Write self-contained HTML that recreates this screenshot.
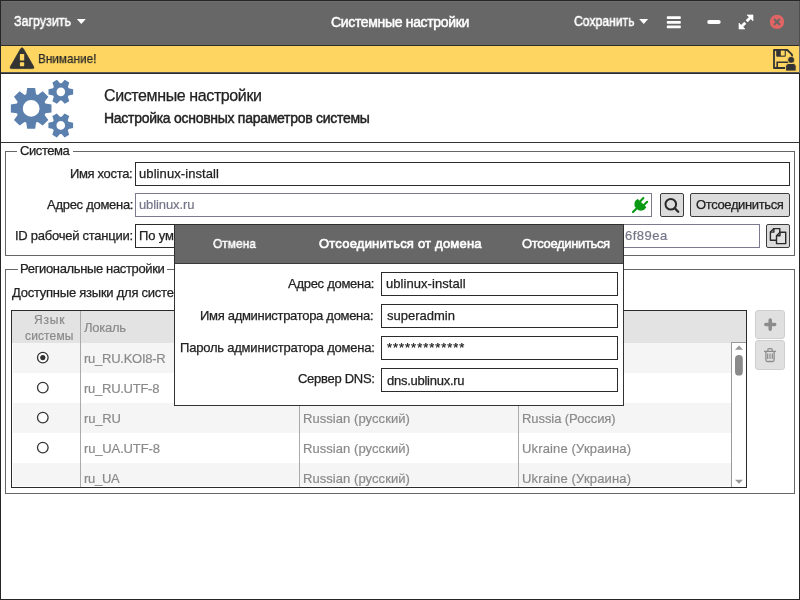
<!DOCTYPE html>
<html><head><meta charset="utf-8">
<style>
*{margin:0;padding:0;box-sizing:border-box}
html,body{width:800px;height:600px;overflow:hidden;background:#fff}
body{position:relative;font-family:"Liberation Sans",sans-serif;color:#222}
.a{position:absolute}
.t{position:absolute;white-space:nowrap;-webkit-text-stroke-width:0.25px;will-change:transform}
.box{position:absolute;border:1px solid #2b2b2b;background:#fff}
.gbox{position:absolute;border:1px solid #7a7a8c;background:#fff}
.btn{position:absolute;border:1px solid #3c3c3c;background:#dcdcdc;border-radius:2px}
.frame{position:absolute;border:1px solid #666}
.leg{position:absolute;background:#fff;height:3px}
svg{position:absolute;left:0;top:0;overflow:visible}
</style></head><body>
<!-- title bar -->
<div class="a" style="left:0;top:0;width:800px;height:45px;background:#676767"></div>
<div class="a" style="left:1px;top:1px;width:798px;height:1px;background:#6d6d6d"></div>
<div class="a" style="left:0;top:45px;width:800px;height:1px;background:#2e2e2e"></div>
<div class="t" style="left:14.2px;top:13.8px;font-size:14px;line-height:14px;font-weight:400;letter-spacing:0.0px;color:#fff;transform:scaleX(0.8906);transform-origin:0 0;-webkit-text-stroke-width:0.5px">Загрузить</div>
<div class="t" style="left:331.0px;top:14.6px;font-size:14px;line-height:14px;font-weight:400;letter-spacing:-0.333px;color:#fff;-webkit-text-stroke-width:0.5px">Системные настройки</div>
<div class="t" style="left:574.2px;top:14.0px;font-size:14px;line-height:14px;font-weight:400;letter-spacing:0.0px;color:#fff;transform:scaleX(0.8696);transform-origin:0 0;-webkit-text-stroke-width:0.5px">Сохранить</div>
<svg width="800" height="600" viewBox="0 0 800 600">
 <path d="M76.8,19 L85.8,19 L81.3,24 Z" fill="#fff"/>
 <path d="M639.2,19 L648.2,19 L643.7,24 Z" fill="#fff"/>
 <rect x="666.8" y="16.3" width="14" height="2.7" rx="0.8" fill="#fff"/>
 <rect x="666.8" y="21" width="14" height="2.7" rx="0.8" fill="#fff"/>
 <rect x="666.8" y="25.6" width="14" height="2.7" rx="0.8" fill="#fff"/>
 <rect x="707.2" y="20" width="13.5" height="4" rx="2" fill="#fff"/>
 <path d="M739,29 L739,23 L745,29 Z M753,14.9 L753,20.9 L747,14.9 Z" fill="#fff" stroke="#fff" stroke-width="0.6" stroke-linejoin="round"/>
 <path d="M740.8,27.2 L745.3,22.7 M751.2,16.7 L746.7,21.2" stroke="#fff" stroke-width="2.8"/>
 <circle cx="777" cy="21.9" r="7.2" fill="#e06464"/>
 <g stroke="#676767" stroke-width="2" stroke-linecap="round"><path d="M774.6,19.5 L779.4,24.3 M779.4,19.5 L774.6,24.3"/></g>
</svg>

<!-- yellow bar -->
<div class="a" style="left:0;top:46px;width:800px;height:26px;background:#fdd560"></div>
<div class="a" style="left:0;top:72px;width:800px;height:1px;background:#55555a"></div>
<div class="a" style="left:0;top:73px;width:800px;height:1px;background:#2a2a2a"></div>
<div class="t" style="left:37.6px;top:51.5px;font-size:13px;line-height:13px;font-weight:400;letter-spacing:0.0px;color:#2a2a2a;transform:scaleX(0.9048);transform-origin:0 0;">Внимание!</div>
<svg width="800" height="600" viewBox="0 0 800 600">
 <path d="M20.6,48.8 Q22,46.6 23.4,48.8 L33.6,66.6 Q34.6,68.6 32.4,68.6 L11.6,68.6 Q9.4,68.6 10.4,66.6 Z" fill="#333" stroke="#333" stroke-width="0.8" stroke-linejoin="round"/>
 <rect x="19.9" y="54" width="4.3" height="6.6" rx="0.6" fill="#fdd560"/>
 <rect x="19.9" y="62.3" width="4.3" height="3.9" rx="0.6" fill="#fdd560"/>
 <!-- floppy -->
 <path d="M774,50 L787.3,50 L792,54.7 L792,68 L774,68 Z" fill="none" stroke="#333" stroke-width="1.8" stroke-linejoin="round"/>
 <rect x="776.2" y="49.5" width="9.6" height="7.2" rx="1" fill="#333"/>
 <rect x="780.8" y="50.6" width="3.9" height="5" fill="#fdd560"/>
 <path d="M777.2,68 L777.2,62.2 L788,62.2" fill="none" stroke="#333" stroke-width="1.6"/>
 <circle cx="791.1" cy="59.9" r="3.5" fill="#333" stroke="#fdd560" stroke-width="0.8"/>
 <path d="M785.6,71.1 L785.6,66.4 Q785.6,63.5 788.5,63.5 L793.3,63.5 Q796.2,63.5 796.2,66.4 L796.2,71.1 Z" fill="#333" stroke="#fdd560" stroke-width="1"/>
</svg>

<!-- header -->
<svg width="800" height="600" viewBox="0 0 800 600"><path fill-rule="evenodd" fill="#5b80ad" d="M26.26,94.22 L27.16,88.09 L35.16,88.09 L36.06,94.22 L36.48,94.38 L36.90,94.54 L37.31,94.72 L37.72,94.91 L42.69,91.21 L48.35,96.87 L44.65,101.84 L44.84,102.25 L45.02,102.66 L45.18,103.08 L45.34,103.50 L51.47,104.40 L51.47,112.40 L45.34,113.30 L45.18,113.72 L45.02,114.14 L44.84,114.55 L44.65,114.96 L48.35,119.93 L42.69,125.59 L37.72,121.89 L37.31,122.08 L36.90,122.26 L36.48,122.42 L36.06,122.58 L35.16,128.71 L27.16,128.71 L26.26,122.58 L25.84,122.42 L25.42,122.26 L25.01,122.08 L24.60,121.89 L19.63,125.59 L13.97,119.93 L17.67,114.96 L17.48,114.55 L17.30,114.14 L17.14,113.72 L16.98,113.30 L10.85,112.40 L10.85,104.40 L16.98,103.50 L17.14,103.08 L17.30,102.66 L17.48,102.25 L17.67,101.84 L13.97,96.87 L19.63,91.21 L24.60,94.91 L25.01,94.72 L25.42,94.54 L25.84,94.38Z M39.56,108.40 A8.4,8.4 0 1,0 22.76,108.40 A8.4,8.4 0 1,0 39.56,108.40Z M61.63,83.29 L64.75,79.87 L69.26,82.47 L67.86,86.89 L68.08,87.21 L68.29,87.55 L68.48,87.90 L68.65,88.25 L73.17,89.25 L73.17,94.45 L68.65,95.45 L68.48,95.80 L68.29,96.15 L68.08,96.49 L67.86,96.81 L69.26,101.23 L64.75,103.83 L61.63,100.41 L61.23,100.44 L60.84,100.45 L60.45,100.44 L60.05,100.41 L56.93,103.83 L52.42,101.23 L53.82,96.81 L53.60,96.49 L53.39,96.15 L53.20,95.80 L53.03,95.45 L48.51,94.45 L48.51,89.25 L53.03,88.25 L53.20,87.90 L53.39,87.55 L53.60,87.21 L53.82,86.89 L52.42,82.47 L56.93,79.87 L60.05,83.29 L60.45,83.26 L60.84,83.25 L61.23,83.26Z M65.14,91.85 A4.3,4.3 0 1,0 56.54,91.85 A4.3,4.3 0 1,0 65.14,91.85Z M61.54,116.84 L64.66,113.42 L69.17,116.02 L67.77,120.44 L67.99,120.76 L68.20,121.10 L68.39,121.45 L68.56,121.80 L73.08,122.80 L73.08,128.00 L68.56,129.00 L68.39,129.35 L68.20,129.70 L67.99,130.04 L67.77,130.36 L69.17,134.78 L64.66,137.38 L61.54,133.96 L61.14,133.99 L60.75,134.00 L60.36,133.99 L59.96,133.96 L56.84,137.38 L52.33,134.78 L53.73,130.36 L53.51,130.04 L53.30,129.70 L53.11,129.35 L52.94,129.00 L48.42,128.00 L48.42,122.80 L52.94,121.80 L53.11,121.45 L53.30,121.10 L53.51,120.76 L53.73,120.44 L52.33,116.02 L56.84,113.42 L59.96,116.84 L60.36,116.81 L60.75,116.80 L61.14,116.81Z M65.05,125.40 A4.3,4.3 0 1,0 56.45,125.40 A4.3,4.3 0 1,0 65.05,125.40Z"/></svg>
<div class="t" style="left:103.7px;top:87.7px;font-size:16px;line-height:16px;font-weight:400;letter-spacing:-0.389px;color:#222;">Системные настройки</div>
<div class="t" style="left:103.7px;top:110.6px;font-size:14px;line-height:14px;font-weight:400;letter-spacing:-0.283px;color:#222;-webkit-text-stroke-width:0.45px">Настройка основных параметров системы</div>
<div class="a" style="left:0;top:142px;width:800px;height:1px;background:#333"></div>

<!-- Система frame -->
<div class="frame" style="left:5px;top:151px;width:790px;height:105px"></div>
<div class="leg" style="left:17px;top:150px;width:56px"></div>
<div class="t" style="left:20.25px;top:143.6px;font-size:13px;line-height:13px;font-weight:400;letter-spacing:-0.417px;color:#222;">Система</div>
<div class="t" style="left:69.9px;top:166.9px;font-size:13px;line-height:13px;font-weight:400;letter-spacing:-0.333px;color:#222;">Имя хоста:</div>
<div class="t" style="left:46.6px;top:197.75px;font-size:13px;line-height:13px;font-weight:400;letter-spacing:-0.283px;color:#222;">Адрес домена:</div>
<div class="t" style="left:14.7px;top:229.1px;font-size:13px;line-height:13px;font-weight:400;letter-spacing:-0.256px;color:#222;">ID рабочей станции:</div>
<div class="box" style="left:135px;top:162px;width:655px;height:24px"></div>
<div class="t" style="left:139.2px;top:166.7px;font-size:13px;line-height:13px;font-weight:400;letter-spacing:0.086px;color:#222;">ublinux-install</div>
<div class="gbox" style="left:135px;top:193px;width:517px;height:24px"></div>
<div class="t" style="left:139.2px;top:197.7px;font-size:13px;line-height:13px;font-weight:400;letter-spacing:-0.111px;color:#76768a;-webkit-text-stroke-width:0.2px">ublinux.ru</div>
<div class="btn" style="left:660px;top:193px;width:24px;height:24px"></div>
<div class="btn" style="left:690px;top:193px;width:100px;height:24px"></div>
<div class="t" style="left:695.6px;top:198.1px;font-size:13px;line-height:13px;font-weight:400;letter-spacing:-0.367px;color:#222;">Отсоединиться</div>
<div class="box" style="left:135px;top:224px;width:60px;height:24px"></div>
<div class="t" style="left:138.75px;top:228.6px;font-size:13px;line-height:13px;font-weight:400;letter-spacing:-0.15px;color:#222;">По ум</div>
<div class="gbox" style="left:195px;top:224px;width:565px;height:24px"></div>
<div class="t" style="left:624.9px;top:228.9px;font-size:13px;line-height:13px;font-weight:400;letter-spacing:0.48px;color:#76768a;-webkit-text-stroke-width:0.2px">6f89ea</div>
<div class="btn" style="left:766px;top:224px;width:24px;height:24px"></div>
<svg width="800" height="600" viewBox="0 0 800 600">
 <!-- plug -->
 <g fill="#0c9a14" stroke="#0c9a14" stroke-linecap="round">
  <path d="M633,212 L637,208" stroke-width="2.2"/>
  <path d="M635.4,206.2 Q634.4,201.6 637.6,199.8 L645.4,207.4 Q643.4,210.8 638.8,209.6 Z" stroke-width="1.5" stroke-linejoin="round"/>
  <path d="M640.3,201.3 L643.4,198 M643.9,205 L647.2,201.8" stroke-width="2.1"/>
 </g>
 <!-- search -->
 <circle cx="670.8" cy="204.3" r="5.3" fill="none" stroke="#2a2a2a" stroke-width="2"/>
 <path d="M675,208.5 L678.2,211.7" stroke="#2a2a2a" stroke-width="2.3" stroke-linecap="round"/>
 <!-- copy -->
 <g fill="#e2e2e2" stroke="#2a2a2a" stroke-width="1.4" stroke-linejoin="round">
  <path d="M773.9,228.6 L779.8,228.6 L779.8,240.2 L770.4,240.2 L770.4,232.1 Z"/>
  <path d="M770.4,232.1 L773.9,232.1 L773.9,228.6" fill="none"/>
  <path d="M780,232.2 L785.7,232.2 L785.7,243.6 L776.5,243.6 L776.5,235.7 Z"/>
  <path d="M776.5,235.7 L780,235.7 L780,232.2" fill="none"/>
 </g>
</svg>

<!-- Regional frame -->
<div class="frame" style="left:5px;top:269px;width:790px;height:225px"></div>
<div class="leg" style="left:18px;top:268px;width:149px"></div>
<div class="t" style="left:20.0px;top:262.3px;font-size:13px;line-height:13px;font-weight:400;letter-spacing:-0.352px;color:#222;">Региональные настройки</div>
<div class="t" style="left:11.7px;top:286.4px;font-size:13px;line-height:13px;font-weight:400;letter-spacing:-0.242px;color:#222;">Доступные языки для систе</div>
<!-- table -->
<div class="box" style="left:11px;top:310px;width:736px;height:178px;background:#fff"></div>
<div class="a" style="left:12px;top:311px;width:734px;height:32px;background:#e3e3e3"></div>
<div class="a" style="left:13px;top:343px;width:718px;height:30px;background:#f5f5f5"></div>
<div class="a" style="left:13px;top:403px;width:718px;height:30px;background:#f5f5f5"></div>
<div class="a" style="left:13px;top:463px;width:718px;height:23px;background:#f5f5f5"></div>
<div class="a" style="left:80px;top:311px;width:1px;height:176px;background:#aaa"></div>
<div class="a" style="left:299px;top:311px;width:1px;height:176px;background:#aaa"></div>
<div class="a" style="left:518px;top:311px;width:1px;height:176px;background:#aaa"></div>
<div class="a" style="left:731px;top:342px;width:15px;height:145px;background:#fff;border-left:1px solid #999;border-top:1px solid #999"></div>
<div class="t" style="left:34.0px;top:313.7px;font-size:12px;line-height:12px;font-weight:400;letter-spacing:0.8px;color:#8a8a8a;-webkit-text-stroke-width:0.2px">Язык</div>
<div class="t" style="left:25.3px;top:329.6px;font-size:12px;line-height:12px;font-weight:400;letter-spacing:0.133px;color:#8a8a8a;-webkit-text-stroke-width:0.2px">системы</div>
<div class="t" style="left:84.4px;top:321.0px;font-size:13px;line-height:13px;font-weight:400;letter-spacing:-0.24px;color:#8a8a8a;-webkit-text-stroke-width:0.2px">Локаль</div>
<div class="t" style="left:83.6px;top:351.7px;font-size:13px;line-height:13px;font-weight:400;letter-spacing:-0.255px;color:#8a8a8a;-webkit-text-stroke-width:0.2px">ru_RU.KOI8-R</div>
<div class="t" style="left:83.6px;top:381.9px;font-size:13px;line-height:13px;font-weight:400;letter-spacing:-0.26px;color:#8a8a8a;-webkit-text-stroke-width:0.2px">ru_RU.UTF-8</div>
<div class="t" style="left:83.6px;top:411.7px;font-size:13px;line-height:13px;font-weight:400;letter-spacing:-0.15px;color:#8a8a8a;-webkit-text-stroke-width:0.2px">ru_RU</div>
<div class="t" style="left:83.6px;top:441.7px;font-size:13px;line-height:13px;font-weight:400;letter-spacing:-0.14px;color:#8a8a8a;-webkit-text-stroke-width:0.2px">ru_UA.UTF-8</div>
<div class="t" style="left:83.6px;top:471.6px;font-size:13px;line-height:13px;font-weight:400;letter-spacing:-0.3px;color:#8a8a8a;-webkit-text-stroke-width:0.2px">ru_UA</div>
<div class="t" style="left:302.5px;top:412.0px;font-size:13px;line-height:13px;font-weight:400;letter-spacing:0.062px;color:#8a8a8a;-webkit-text-stroke-width:0.2px">Russian (русский)</div>
<div class="t" style="left:302.5px;top:442.2px;font-size:13px;line-height:13px;font-weight:400;letter-spacing:0.062px;color:#8a8a8a;-webkit-text-stroke-width:0.2px">Russian (русский)</div>
<div class="t" style="left:302.5px;top:472.0px;font-size:13px;line-height:13px;font-weight:400;letter-spacing:0.062px;color:#8a8a8a;-webkit-text-stroke-width:0.2px">Russian (русский)</div>
<div class="t" style="left:521.5px;top:412.0px;font-size:13px;line-height:13px;font-weight:400;letter-spacing:-0.071px;color:#8a8a8a;-webkit-text-stroke-width:0.2px">Russia (Россия)</div>
<div class="t" style="left:521.5px;top:442.2px;font-size:13px;line-height:13px;font-weight:400;letter-spacing:0.15px;color:#8a8a8a;-webkit-text-stroke-width:0.2px">Ukraine (Украина)</div>
<div class="t" style="left:521.5px;top:472.0px;font-size:13px;line-height:13px;font-weight:400;letter-spacing:0.15px;color:#8a8a8a;-webkit-text-stroke-width:0.2px">Ukraine (Украина)</div>
<svg width="800" height="600" viewBox="0 0 800 600">
 <g fill="#fff" stroke="#333" stroke-width="1.3">
  <circle cx="42.8" cy="357.6" r="5.3"/>
  <circle cx="42.8" cy="387.6" r="5.3"/>
  <circle cx="42.8" cy="417.6" r="5.3"/>
  <circle cx="42.8" cy="447.6" r="5.3"/>
 </g>
 <circle cx="42.8" cy="357.6" r="2.6" fill="#333"/>
 <path d="M735,349.8 L739,345.6 L743,349.8 Z" fill="#999"/>
 <path d="M735,479.8 L739,483.8 L743,479.8 Z" fill="#999"/>
 <rect x="735" y="355" width="7.8" height="20.6" rx="3.9" fill="#8a8a8a"/>
</svg>
<div class="a" style="left:755px;top:310px;width:30px;height:29px;background:#e0e0e0;border:1px solid #cfcfcf;border-radius:3px"></div>
<div class="a" style="left:755px;top:340px;width:30px;height:30px;background:#e0e0e0;border:1px solid #cfcfcf;border-radius:3px"></div>
<svg width="800" height="600" viewBox="0 0 800 600">
 <path d="M765.8,324.6 L774.7,324.6 M770.2,320 L770.2,329.2" stroke="#8c8c8c" stroke-width="3.5" stroke-linecap="round"/>
 <g fill="none" stroke="#8c8c8c" stroke-width="1.3">
  <path d="M764,351.4 L776,351.4"/>
  <path d="M767.8,351 L767.8,350 Q767.8,348.6 769.2,348.6 L770.8,348.6 Q772.3,348.6 772.3,350 L772.3,351"/>
  <path d="M765.9,351.5 L765.9,360 Q765.9,361.5 767.4,361.5 L772.6,361.5 Q774.1,361.5 774.1,360 L774.1,351.5"/>
  <path d="M767.7,353.4 L767.7,358.9 M770,353.4 L770,358.9 M772.3,353.4 L772.3,358.9" stroke-width="1.2"/>
 </g>
</svg>

<!-- modal -->
<div class="a" style="left:174px;top:224px;width:450px;height:182px;background:#fff;border:1px solid #333"></div>
<div class="a" style="left:174px;top:224px;width:450px;height:40px;background:#676767;border:1px solid #2e2e2e;border-bottom-color:#3a3a3a"></div>
<div class="t" style="left:212.5px;top:236.5px;font-size:13px;line-height:13px;font-weight:400;letter-spacing:0.0px;color:#fff;transform:scaleX(0.9191);transform-origin:0 0;-webkit-text-stroke-width:0.5px">Отмена</div>
<div class="t" style="left:318.6px;top:236.9px;font-size:13px;line-height:13px;font-weight:400;letter-spacing:0.218px;color:#fff;-webkit-text-stroke-width:0.65px">Отсоединиться от домена</div>
<div class="t" style="left:521.5px;top:236.7px;font-size:13px;line-height:13px;font-weight:400;letter-spacing:-0.35px;color:#fff;-webkit-text-stroke-width:0.5px">Отсоединиться</div>
<div class="t" style="left:287.8px;top:276.6px;font-size:13px;line-height:13px;font-weight:400;letter-spacing:-0.283px;color:#222;">Адрес домена:</div>
<div class="t" style="left:200.4px;top:308.6px;font-size:13px;line-height:13px;font-weight:400;letter-spacing:-0.304px;color:#222;">Имя администратора домена:</div>
<div class="t" style="left:179.6px;top:340.6px;font-size:13px;line-height:13px;font-weight:400;letter-spacing:-0.214px;color:#222;">Пароль администратора домена:</div>
<div class="t" style="left:297.5px;top:372.3px;font-size:13px;line-height:13px;font-weight:400;letter-spacing:-0.28px;color:#222;">Сервер DNS:</div>
<div class="box" style="left:381px;top:272px;width:237px;height:24px"></div>
<div class="box" style="left:381px;top:304px;width:237px;height:24px"></div>
<div class="box" style="left:381px;top:336px;width:237px;height:24px"></div>
<div class="box" style="left:381px;top:368px;width:237px;height:24px"></div>
<div class="t" style="left:385.6px;top:277.4px;font-size:13px;line-height:13px;font-weight:400;letter-spacing:0.057px;color:#222;">ublinux-install</div>
<div class="t" style="left:386.6px;top:309.4px;font-size:13px;line-height:13px;font-weight:400;letter-spacing:0.0px;color:#222;">superadmin</div>
<div class="t" style="left:386.6px;top:341.4px;font-size:13px;line-height:13px;font-weight:400;letter-spacing:0.967px;color:#222;">*************</div>
<div class="t" style="left:386.6px;top:373.7px;font-size:13px;line-height:13px;font-weight:400;letter-spacing:-0.262px;color:#222;">dns.ublinux.ru</div>

<!-- window border -->
<div class="a" style="left:0;top:0;width:800px;height:600px;border:1px solid #262626"></div>
<div class="a" style="left:799px;top:1px;width:1px;height:45px;background:#4e4e4e"></div>
<div class="a" style="left:799px;top:46px;width:1px;height:27px;background:#6a6a6a"></div>
</body></html>
